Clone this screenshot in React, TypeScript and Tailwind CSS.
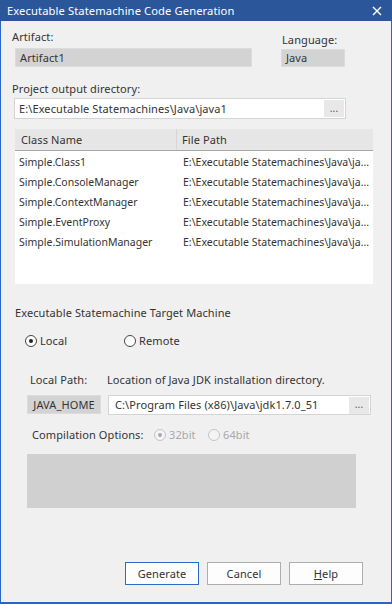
import React from 'react';

const rows = [
  'Simple.Class1',
  'Simple.ConsoleManager',
  'Simple.ContextManager',
  'Simple.EventProxy',
  'Simple.SimulationManager',
];

function Radio({ label, checked, disabled, className }: { label: string, checked?: boolean, disabled?: boolean, className?: string }) {
  return (
    <div className={`flex items-center h-4 ${className ?? ''}`}>
      <span className={`w-[12px] h-[12px] rounded-full border flex items-center justify-center ${disabled ? 'border-[#c4c4c4] bg-[#f4f4f4]' : 'border-[#444] bg-white'}`}>
        {checked && <span className={`w-[4px] h-[4px] rounded-full ${disabled ? 'bg-[#a8a8a8]' : 'bg-[#222]'}`}></span>}
      </span>
      <span className={`ml-[3px] ${disabled ? 'text-[#a8a8a8]' : ''}`}>{label}</span>
    </div>
  );
}

function Browse() {
  return (
    <div className="ml-auto mr-[1px] w-[20px] h-[17px] bg-[#e8e8e8] flex items-center justify-center text-[10px] text-[#555] leading-none pb-[2px]">...</div>
  );
}

export default function App() {
  return (
    <div className="w-[392px] h-[604px] flex flex-col bg-[#f0f0f0] text-[11px] tracking-[0.1px] leading-4 text-[#333]" style={{ fontFamily: '"Noto Sans", "Open Sans", sans-serif' }}>
      <div className="h-[21px] bg-[#2b579a] flex items-center pl-[7px] text-white text-[11.2px] shrink-0">
        <span>Executable Statemachine Code Generation</span>
        <svg className="ml-auto mr-[10px]" width="10" height="10" viewBox="0 0 10 10">
          <path d="M1 1 L9 9 M9 1 L1 9" stroke="#fff" strokeWidth="1.4" />
        </svg>
      </div>

      <div className="flex-1 flex flex-col border-l border-r border-b-2 border-[#2a66c8]">
        <div className="flex mt-[8px] ml-[11px]">
          <div className="w-[240px]">
            <div className="h-4">Artifact:</div>
            <div className="mt-[3px] ml-[3px] w-[237px] h-[19px] bg-[#d3d3d3] border border-[#dcdcdc] pl-[4px] flex items-center">Artifact1</div>
          </div>
          <div className="ml-[29px] mt-[3px]">
            <div className="h-4 ml-[1px]">Language:</div>
            <div className="mt-[1px] w-[64px] h-[18px] bg-[#d3d3d3] border border-[#dcdcdc] pl-[4px] flex items-center">Java</div>
          </div>
        </div>

        <div className="mt-[14px] ml-[11px] h-4">Project output directory:</div>
        <div className="mt-[1px] ml-[13px] w-[332px] h-[21px] bg-white border border-[#d4d4d4] flex items-center pl-[4px]">
          <span>E:\Executable Statemachines\Java\java1</span>
          <Browse />
        </div>

        <div className="mt-[10px] ml-[14px] w-[358px] h-[155px] bg-white flex flex-col">
          <div className="h-[22px] bg-[#e6e6e6] border-b border-[#a6a6a6] flex items-center">
            <div className="w-[162px] pl-[6px] border-r border-[#d6d6d6] h-full flex items-center">Class Name</div>
            <div className="pl-[5px]">File Path</div>
          </div>
          <div className="mt-[1px] text-[10.5px] tracking-normal">
            {rows.map((r) => (
              <div key={r} className="h-[20px] flex items-center">
                <div className="w-[168px] pl-[4px] whitespace-nowrap">{r}</div>
                <div className="whitespace-nowrap overflow-hidden">E:\Executable Statemachines\Java\ja...</div>
              </div>
            ))}
          </div>
        </div>

        <div className="mt-[21px] ml-[14px] h-4">Executable Statemachine Target Machine</div>
        <div className="mt-[12px] ml-[24px] flex">
          <Radio label="Local" checked className="w-[99px]" />
          <Radio label="Remote" />
        </div>

        <div className="mt-[23px] ml-[29px] flex h-4">
          <span className="w-[77px]">Local Path:</span>
          <span>Location of Java JDK installation directory.</span>
        </div>
        <div className="mt-[7px] ml-[26px] flex">
          <div className="w-[74px] h-[19px] bg-[#d3d3d3] border border-[#dcdcdc] flex items-center justify-center">JAVA_HOME</div>
          <div className="ml-[7px] w-[263px] h-[20px] bg-white border border-[#d4d4d4] flex items-center pl-[6px]">
            <span>C:\Program Files (x86)\Java\jdk1.7.0_51</span>
            <Browse />
          </div>
        </div>

        <div className="mt-[12px] ml-[31px] flex h-4">
          <span className="w-[122px]">Compilation Options:</span>
          <Radio label="32bit" checked disabled className="w-[54px]" />
          <Radio label="64bit" disabled />
        </div>

        <div className="mt-[11px] ml-[26px] w-[329px] h-[54px] bg-[#d0d0d0]"></div>

        <div className="mt-[54px] ml-[124px] flex gap-[8px]">
          <button className="w-[74px] h-[23px] bg-[#fdfdfd] border border-[#2a6cc8]">Generate</button>
          <button className="w-[74px] h-[23px] bg-[#fdfdfd] border border-[#adadad]">Cancel</button>
          <button className="w-[74px] h-[23px] bg-[#fdfdfd] border border-[#adadad]"><span className="underline">H</span>elp</button>
        </div>
      </div>
    </div>
  );
}
